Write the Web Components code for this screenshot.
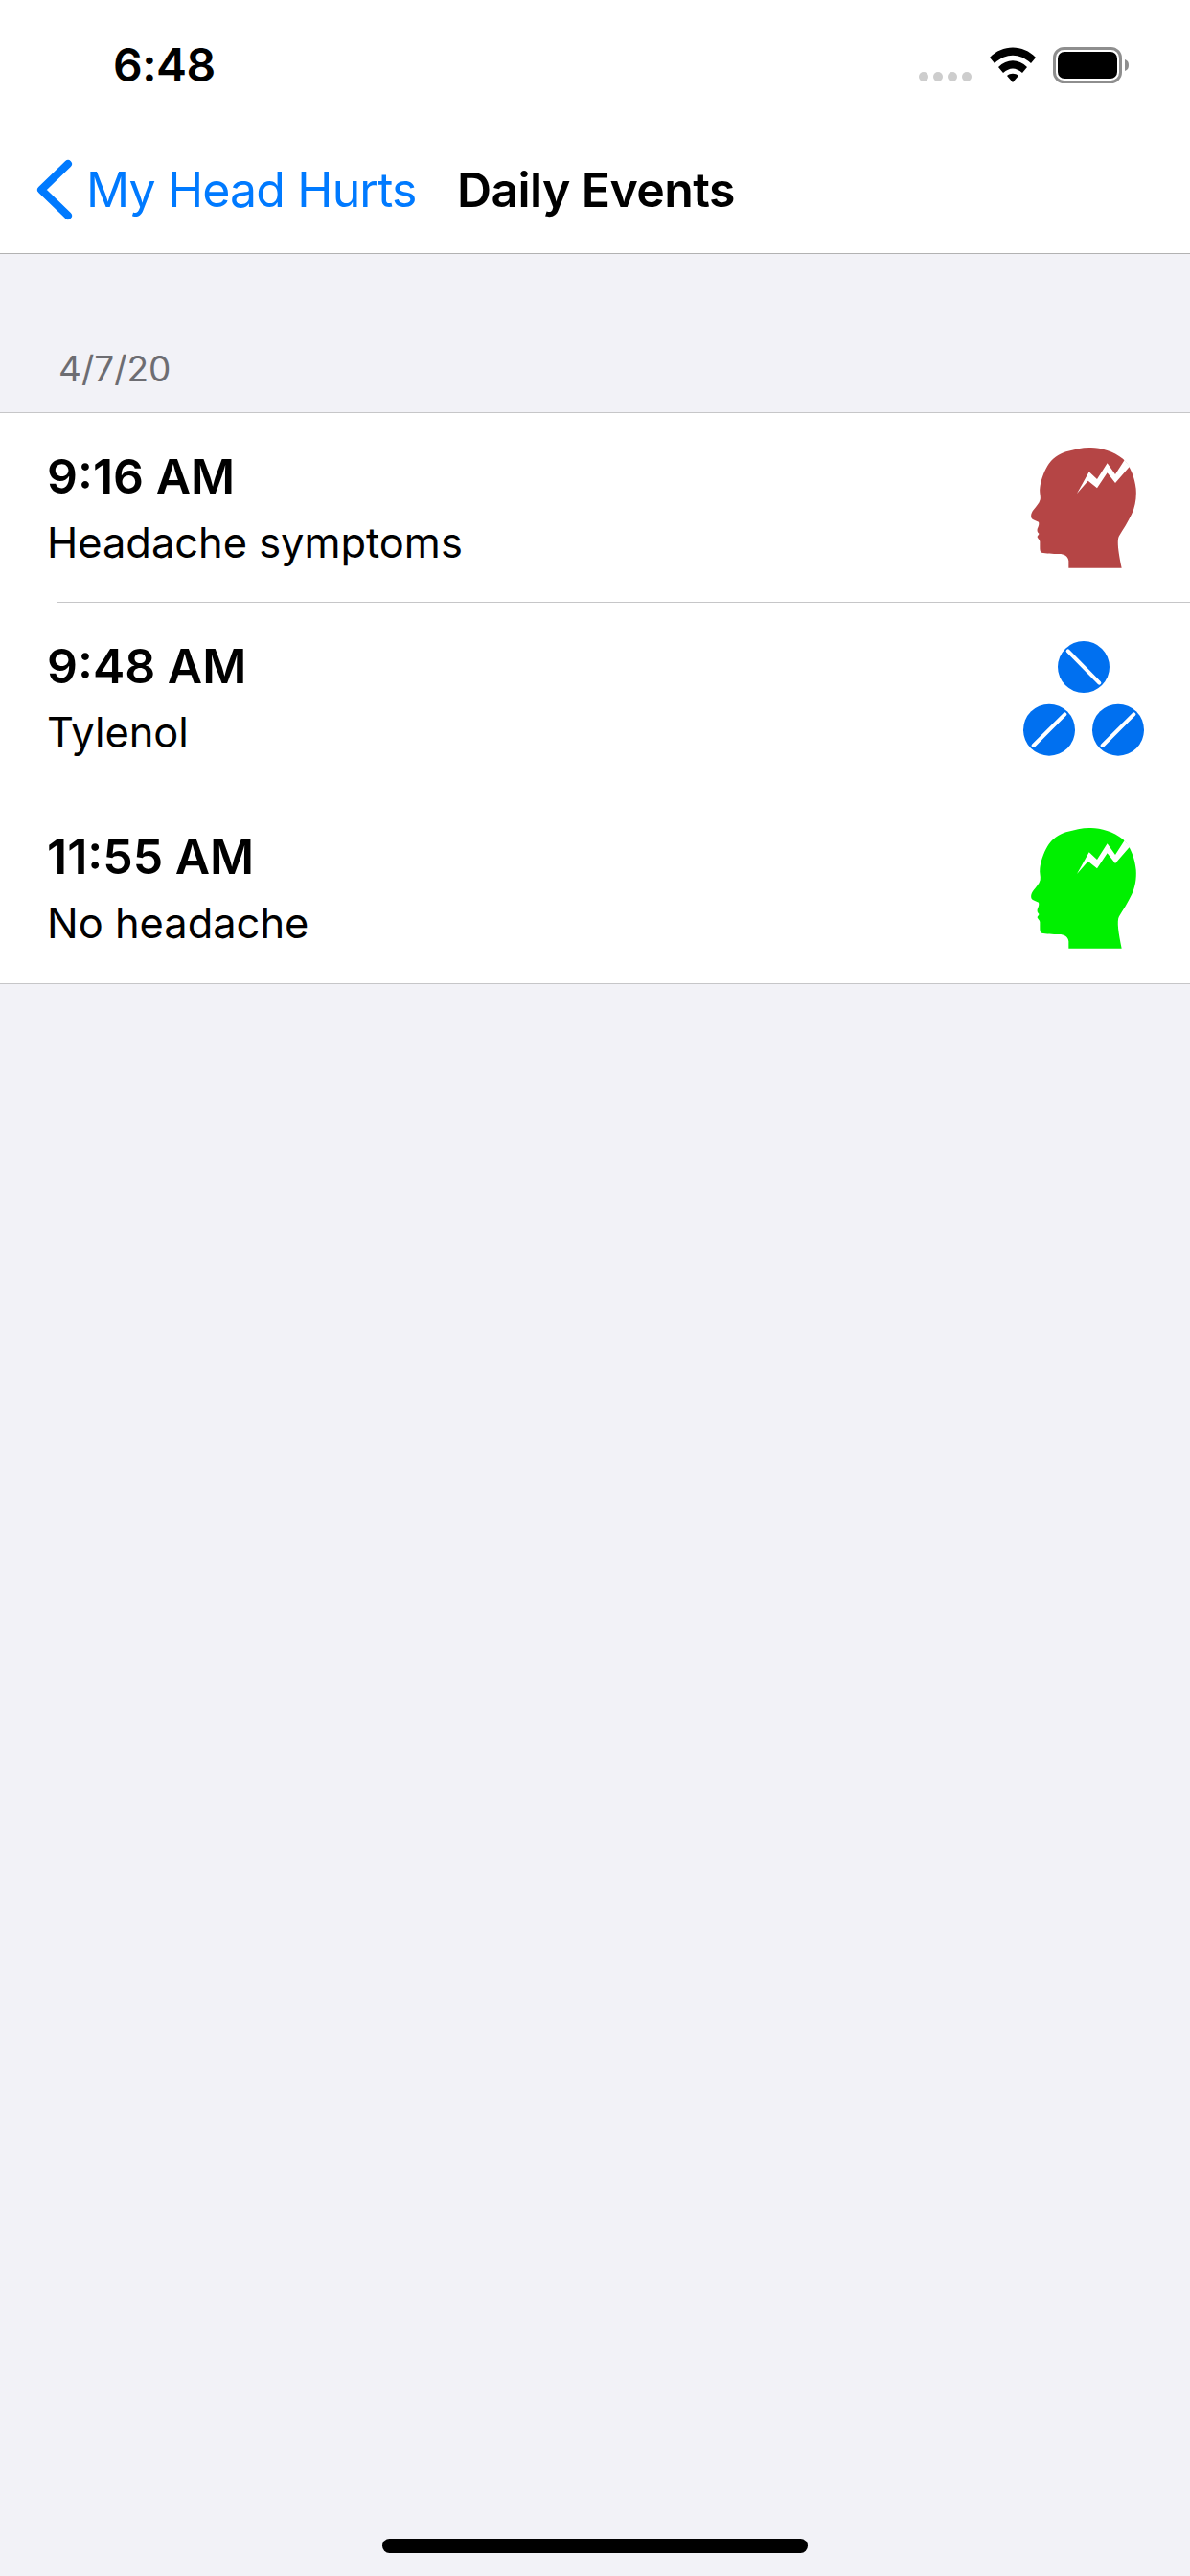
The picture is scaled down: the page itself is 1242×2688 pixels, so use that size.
<!DOCTYPE html>
<html lang="en">
<head>
<meta charset="utf-8">
<title>Daily Events</title>
<style>
  html, body { margin: 0; padding: 0; background: #f2f2f7; }
  body { font-family: Inter, "Liberation Sans", sans-serif; color: #000; }
</style>
</head>
<body>
<events-screen>
  <status-bar slot="top" time="6:48"></status-bar>
  <nav-bar slot="top" back="My Head Hurts" title="Daily Events"></nav-bar>
  <section-header>4/7/20</section-header>
  <event-list>
    <event-row>
      <span slot="time">9:16 AM</span>
      <span slot="label">Headache symptoms</span>
      <event-icon slot="icon" kind="head" color="#b54545"></event-icon>
    </event-row>
    <event-row>
      <span slot="time">9:48 AM</span>
      <span slot="label">Tylenol</span>
      <event-icon slot="icon" kind="pills" color="#0070f0"></event-icon>
    </event-row>
    <event-row last>
      <span slot="time">11:55 AM</span>
      <span slot="label">No headache</span>
      <event-icon slot="icon" kind="head" color="#00f000"></event-icon>
    </event-row>
  </event-list>
</events-screen>

<script>
// page frame: white top part, grey content, home indicator at the bottom
class EventsScreen extends HTMLElement {
  constructor() {
    super();
    this.attachShadow({ mode: 'open' });
    this.shadowRoot.innerHTML = `
      <style>
        :host { display: flex; flex-direction: column; width: 1242px; height: 2688px; background: #f2f2f7; }
        .top { background: #fff; border-bottom: 1px solid #b2b2b2; height: 264px; }
        .content { flex: 1; }
        .home { height: 39px; display: flex; justify-content: center; }
        .home i { display: block; width: 444px; height: 15px; border-radius: 8px; background: #000; }
      </style>
      <div class="top"><slot name="top"></slot></div>
      <div class="content"><slot></slot></div>
      <div class="home"><i></i></div>
    `;
  }
}

class StatusBar extends HTMLElement {
  constructor() {
    super();
    this.attachShadow({ mode: 'open' });
    this.shadowRoot.innerHTML = `
      <style>
        :host { display: flex; align-items: flex-start; justify-content: space-between; height: 132px; box-sizing: border-box; padding: 41px 63px 0 118px; }
        .time { font-size: 48px; font-weight: 600; line-height: 54px; letter-spacing: -0.5px; }
        .icons { display: flex; align-items: flex-start; margin-top: 8px; }
        .dots { display: flex; gap: 5px; margin: 26px 19px 0 0; }
        .dots i { display: block; width: 10px; height: 10px; border-radius: 50%; background: #cdcdcd; }
        svg { display: block; }
      </style>
      <span class="time">${this.getAttribute('time')}</span>
      <div class="icons">
        <div class="dots"><i></i><i></i><i></i><i></i></div>
        <svg width="48" height="37" viewBox="0 0 48 37" style="margin-right:18px">
          <path d="M0 11 C13 -3 35 -3 48 11 L43 17 C31 6 17 6 5 17 Z" fill="#000"/>
          <path d="M9 21 C18 12 30 12 39 21 L34 27 C27 21 21 21 14 27 Z" fill="#000"/>
          <path d="M18 30 C21 27 27 27 30 30 L24 37 Z" fill="#000"/>
        </svg>
        <svg width="80" height="38" viewBox="0 0 80 38">
          <rect x="1.5" y="1.5" width="69" height="35" rx="10" fill="none" stroke="#8e8e8e" stroke-width="3"/>
          <rect x="5" y="5" width="62" height="28" rx="7" fill="#000"/>
          <path d="M75 13 C78 14 79 16 79 19 C79 22 78 24 75 25 Z" fill="#8e8e8e"/>
        </svg>
      </div>
    `;
  }
}

class NavBar extends HTMLElement {
  constructor() {
    super();
    this.attachShadow({ mode: 'open' });
    this.shadowRoot.innerHTML = `
      <style>
        :host { display: flex; align-items: center; height: 132px; box-sizing: border-box; padding: 0 0 0 38px; font-size: 50px; }
        svg { display: block; flex: none; margin-right: 14px; }
        .back { color: #007aff; width: 387px; flex: none; letter-spacing: -0.85px; }
        .title { font-weight: 600; letter-spacing: -0.6px; }
      </style>
      <svg width="38" height="64" viewBox="0 0 38 64">
        <path d="M33 5 L5 32 L33 59" fill="none" stroke="#007aff" stroke-width="8" stroke-linecap="round" stroke-linejoin="round"/>
      </svg>
      <span class="back">${this.getAttribute('back')}</span>
      <span class="title">${this.getAttribute('title')}</span>
    `;
  }
}

class SectionHeader extends HTMLElement {
  constructor() {
    super();
    this.attachShadow({ mode: 'open' });
    this.shadowRoot.innerHTML = `
      <style>
        :host { display: flex; align-items: flex-end; height: 165px; box-sizing: border-box; padding: 0 0 22px 61px; color: #6d6d72; font-size: 37px; line-height: 46px; }
      </style>
      <slot></slot>
    `;
  }
}

class EventList extends HTMLElement {
  constructor() {
    super();
    this.attachShadow({ mode: 'open' });
    this.shadowRoot.innerHTML = `
      <style>
        :host { display: block; background: #fff; border-top: 1px solid #c6c6c8; border-bottom: 1px solid #c6c6c8; }
      </style>
      <slot></slot>
    `;
  }
}

class EventRow extends HTMLElement {
  constructor() {
    super();
    this.attachShadow({ mode: 'open' });
    this.shadowRoot.innerHTML = `
      <style>
        :host { display: block; }
        .row { display: flex; align-items: stretch; height: 197.4px; }
        :host([last]) .row { height: 198px; }
        .text { flex: 1; display: flex; flex-direction: column; padding: 37px 0 0 49px; }
        .time { font-size: 50px; font-weight: 600; line-height: 58px; }
        .label { font-size: 43.4px; line-height: 50px; margin-top: 15px; }
        .sep { height: 1px; margin-left: 60px; background: #c6c6c8; }
        :host([last]) .sep { display: none; }
      </style>
      <div class="row">
        <div class="text">
          <div class="time"><slot name="time"></slot></div>
          <div class="label"><slot name="label"></slot></div>
        </div>
        <slot name="icon"></slot>
      </div>
      <div class="sep"></div>
    `;
  }
}

// head silhouette and the three pills, coordinates taken at 3x of the final size
class EventIcon extends HTMLElement {
  constructor() {
    super();
    this.attachShadow({ mode: 'open' });
    const color = this.getAttribute('color');
    const head = `
      <path fill="${color}" d="M226 458 L226 436 C224 420 212 414 196 414 C176 413 154 413 142 410 C136 408 136 400 136 392 L136 376 C136 368 128 366 128 360 C128 356 134 354 133 350 C128 346 126 340 129 333 C132 327 134 320 132 314 C124 310 112 308 109 300 C107 292 110 284 116 276 C124 266 134 256 137 244 C139 232 134 222 136 208 C138 188 146 162 160 138 C172 118 196 100 218 94 C246 86 272 80 296 81 C328 82 366 92 396 116 C420 138 434 178 437 212 C439 240 434 266 424 288 C412 314 396 338 384 358 C376 372 382 410 392 458 Z"/>
      <path fill="#fff" d="M252 225 L290 157 L315 180 L347 130 L372 165 L401 120 L417 140 L372 192 L347 160 L315 208 L287 185 Z"/>`;
    const pill = (cx, cy, x1, y1, x2, y2) => `
      <circle cx="${cx}" cy="${cy}" r="81" fill="${color}"/>
      <line x1="${x1}" y1="${y1}" x2="${x2}" y2="${y2}" stroke="#fff" stroke-width="12" stroke-linecap="round"/>`;
    const pills = pill(273, 138, 224, 88, 322, 188) + pill(165, 335, 116, 384, 214, 286) + pill(381, 335, 332, 384, 430, 286);
    const isHead = this.getAttribute('kind') === 'head';
    this.shadowRoot.innerHTML = `
      <style>
        :host { display: block; flex: none; width: 202px; height: 197px; }
        svg { display: block; }
      </style>
      <svg width="202" height="197" viewBox="0 ${isHead ? -27 : -63} 606 591">${isHead ? head : pills}</svg>
    `;
  }
}

customElements.define('events-screen', EventsScreen);
customElements.define('status-bar', StatusBar);
customElements.define('nav-bar', NavBar);
customElements.define('section-header', SectionHeader);
customElements.define('event-list', EventList);
customElements.define('event-row', EventRow);
customElements.define('event-icon', EventIcon);
</script>
</body>
</html>
